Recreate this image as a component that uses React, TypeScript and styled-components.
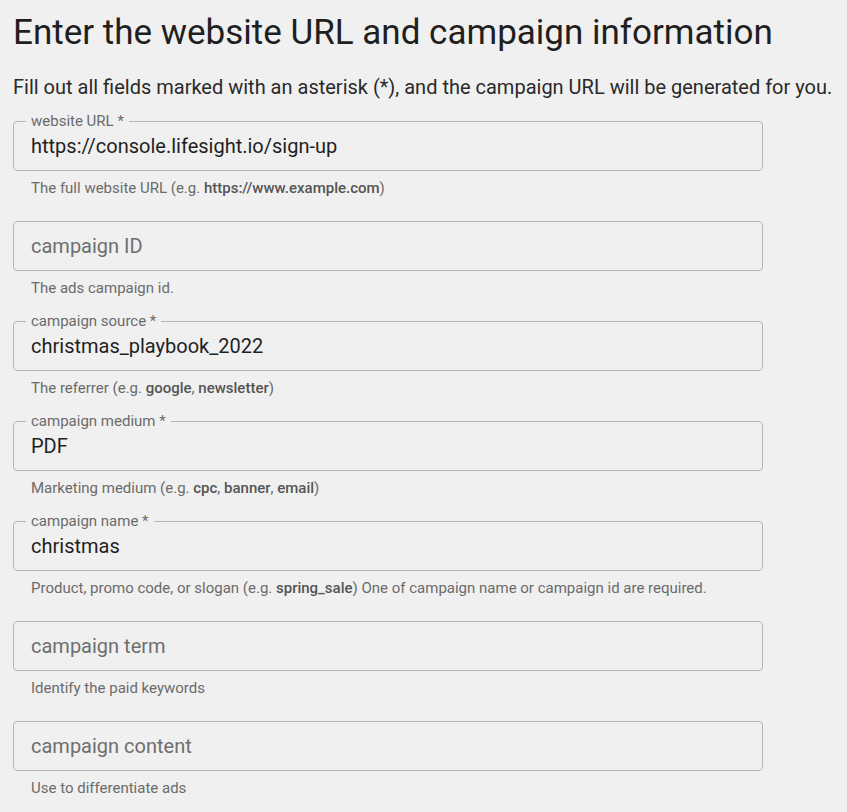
import React from "react";
import styled, { createGlobalStyle } from "styled-components";

const Global = createGlobalStyle`
  html, body { margin: 0; padding: 0; background: #f0f0f0; }
  body { font-family: Roboto, "Noto Sans", Arial, sans-serif; }
`;

const Page = styled.div`
  padding: 8px 13px 0 13px;
  width: 750px;
`;

const Title = styled.h1`
  margin: 0;
  font-size: 35px;
  font-weight: 400;
  line-height: 50px;
  color: #1f1f1f;
  white-space: nowrap;
`;

const Subtitle = styled.p`
  margin: 14px 0 0 0;
  font-size: 20px;
  line-height: 30px;
  color: #2a2a2a;
  white-space: nowrap;
`;

const Form = styled.div`
  margin-top: 19px;
  display: flex;
  flex-direction: column;
  gap: 23px;
`;

const FieldWrap = styled.div`
  display: flex;
  flex-direction: column;
`;

const Box = styled.div`
  position: relative;
  height: 48px;
  border: 1px solid #b5b5b5;
  border-radius: 4px;
  display: flex;
  align-items: center;
  padding: 0 17px;
`;

const Label = styled.span`
  position: absolute;
  top: -10px;
  left: 12px;
  padding: 0 5px;
  background: #f0f0f0;
  font-size: 15px;
  line-height: 18px;
  color: #6b6b6b;
`;

const Value = styled.span<{ $placeholder?: boolean }>`
  font-size: 20px;
  color: ${(p) => (p.$placeholder ? "#6e6e6e" : "#1f1f1f")};
  line-height: 24px;
`;

const Helper = styled.div`
  margin-top: 7px;
  padding-left: 18px;
  font-size: 15px;
  line-height: 20px;
  color: #6b6b6b;
  white-space: nowrap;
  b {
    font-weight: 500;
    color: #555555;
  }
`;

type FieldProps = {
  label?: string;
  value?: string;
  placeholder?: string;
  helper: React.ReactNode;
};

const Field = ({ label, value, placeholder, helper }: FieldProps) => (
  <FieldWrap>
    <Box>
      {label && <Label>{label}</Label>}
      {value ? <Value>{value}</Value> : <Value $placeholder>{placeholder}</Value>}
    </Box>
    <Helper>{helper}</Helper>
  </FieldWrap>
);

export default function App() {
  return (
    <>
      <Global />
      <Page>
        <Title>Enter the website URL and campaign information</Title>
        <Subtitle>
          Fill out all fields marked with an asterisk (*), and the campaign URL will be generated for you.
        </Subtitle>
        <Form>
          <Field
            label="website URL *"
            value="https://console.lifesight.io/sign-up"
            helper={<>The full website URL (e.g. <b>https://www.example.com</b>)</>}
          />
          <Field placeholder="campaign ID" helper="The ads campaign id." />
          <Field
            label="campaign source *"
            value="christmas_playbook_2022"
            helper={<>The referrer (e.g. <b>google</b>, <b>newsletter</b>)</>}
          />
          <Field
            label="campaign medium *"
            value="PDF"
            helper={<>Marketing medium (e.g. <b>cpc</b>, <b>banner</b>, <b>email</b>)</>}
          />
          <Field
            label="campaign name *"
            value="christmas"
            helper={
              <>
                Product, promo code, or slogan (e.g. <b>spring_sale</b>) One of campaign name or campaign id are required.
              </>
            }
          />
          <Field placeholder="campaign term" helper="Identify the paid keywords" />
          <Field placeholder="campaign content" helper="Use to differentiate ads" />
        </Form>
      </Page>
    </>
  );
}
